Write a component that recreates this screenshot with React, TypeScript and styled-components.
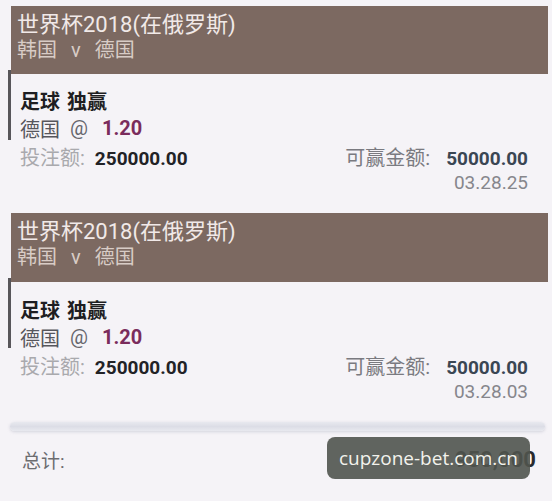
import React from "react";
import styled, { createGlobalStyle } from "styled-components";

const Global = createGlobalStyle`
  html, body { margin: 0; padding: 0; }
  body {
    width: 552px;
    height: 501px;
    overflow: hidden;
    background: #f5f3f7;
    font-family: Roboto, "Noto Sans CJK SC", sans-serif;
  }
`;

const Page = styled.div`
  position: relative;
  width: 552px;
  height: 501px;
  box-sizing: border-box;
  padding: 6px 4px 0 8px;
  display: flex;
  flex-direction: column;
`;

const Card = styled.section<{ $gap: number }>`
  display: flex;
  flex-direction: column;
  margin-bottom: ${(p) => p.$gap}px;
`;

const Header = styled.header<{ $h: number }>`
  margin-left: 3px;
  height: ${(p) => p.$h}px;
  box-sizing: border-box;
  padding: 6px 0 0 6px;
  background: #7c6961;
  display: flex;
  flex-direction: column;
`;

const Title = styled.div`
  font-size: 22px;
  line-height: 26px;
  color: #f1e9e8;
`;

const Sub = styled.div`
  font-size: 20px;
  line-height: 24px;
  color: #d8ccc6;
  display: flex;
  gap: 14px;
`;

const Body = styled.div`
  display: grid;
  grid-template-columns: 3px 1fr;
`;

const Rail = styled.div`
  margin-top: -4px;
  height: 70px;
  background: #58565a;
`;

const Content = styled.div<{ $top: number }>`
  padding: ${(p) => p.$top}px 20px 0 9px;
  display: flex;
  flex-direction: column;
`;

const Line = styled.div<{ $h?: number }>`
  display: flex;
  align-items: center;
  height: ${(p) => p.$h ?? 28}px;
  font-size: 19px;
`;

const Spread = styled(Line)`
  justify-content: space-between;
`;

const Right = styled(Line)`
  justify-content: flex-end;
`;

const Market = styled.span`
  font-size: 20px;
  font-weight: 700;
  color: #1e1e22;
  word-spacing: 2px;
`;

const Team = styled.span`
  font-size: 20px;
  color: #56565c;
`;

const At = styled.span`
  margin-left: 10px;
  font-size: 20px;
  color: #66666c;
`;

const Odds = styled.span`
  margin-left: 14px;
  font-weight: 700;
  font-size: 20px;
  color: #7a2c5c;
`;

const Label = styled.span<{ $c: string; $gap: number }>`
  color: ${(p) => p.$c};
  font-size: 20px;
  margin-right: ${(p) => p.$gap}px;
`;

const Value = styled.span<{ $c: string }>`
  color: ${(p) => p.$c};
  font-weight: 700;
  font-size: 19px;
`;

const Date = styled.span`
  color: #86868c;
  font-size: 19px;
`;

const Divider = styled.div`
  margin: 0 3px 0 2px;
  height: 9px;
  border-radius: 5px;
  background: linear-gradient(#e8e9ef, #dcdde6 50%, #e8e9ef);
  box-shadow: 0 1px 3px rgba(180, 182, 198, 0.5);
`;

const Total = styled.div`
  margin-top: 14px;
  padding: 0 12px 0 14px;
  height: 28px;
  display: flex;
  align-items: center;
  justify-content: space-between;
`;

const TotalLabel = styled.span`
  font-size: 19px;
  color: #6c6c70;
`;

const TotalValue = styled.span`
  font-size: 22px;
  font-weight: 700;
  color: #2a2a2e;
`;

const Watermark = styled.div`
  position: absolute;
  left: 327px;
  top: 437px;
  width: 203px;
  height: 42px;
  border-radius: 8px;
  background: rgba(80, 84, 78, 0.9);
  display: flex;
  align-items: center;
  justify-content: center;
  font-family: "Open Sans", "Noto Sans", sans-serif;
  font-size: 19px;
  color: #f2f2ec;
`;

type Bet = { date: string; headerH: number; top: number; gap: number };

const bets: Bet[] = [
  { date: "03.28.25", headerH: 68, top: 12, gap: 18 },
  { date: "03.28.03", headerH: 69, top: 13, gap: 18 },
];

export default function App() {
  return (
    <>
      <Global />
      <Page>
        {bets.map((b) => (
          <Card key={b.date} $gap={b.gap}>
            <Header $h={b.headerH}>
              <Title>世界杯2018(在俄罗斯)</Title>
              <Sub>
                <span>韩国</span>
                <span>v</span>
                <span>德国</span>
              </Sub>
            </Header>
            <Body>
              <Rail />
              <Content $top={b.top}>
                <Line>
                  <Market>足球 独赢</Market>
                </Line>
                <Line>
                  <Team>德国</Team>
                  <At>@</At>
                  <Odds>1.20</Odds>
                </Line>
                <Spread>
                  <span>
                    <Label $c="#a9a9ad" $gap={10}>投注额:</Label>
                    <Value $c="#222226">250000.00</Value>
                  </span>
                  <span>
                    <Label $c="#7a7a80" $gap={16}>可赢金额:</Label>
                    <Value $c="#3a4653">50000.00</Value>
                  </span>
                </Spread>
                <Right $h={25}>
                  <Date>{b.date}</Date>
                </Right>
              </Content>
            </Body>
          </Card>
        ))}
        <Divider />
        <Total>
          <TotalLabel>总计:</TotalLabel>
          <TotalValue>950,000</TotalValue>
        </Total>
        <Watermark>cupzone-bet.com.cn</Watermark>
      </Page>
    </>
  );
}
